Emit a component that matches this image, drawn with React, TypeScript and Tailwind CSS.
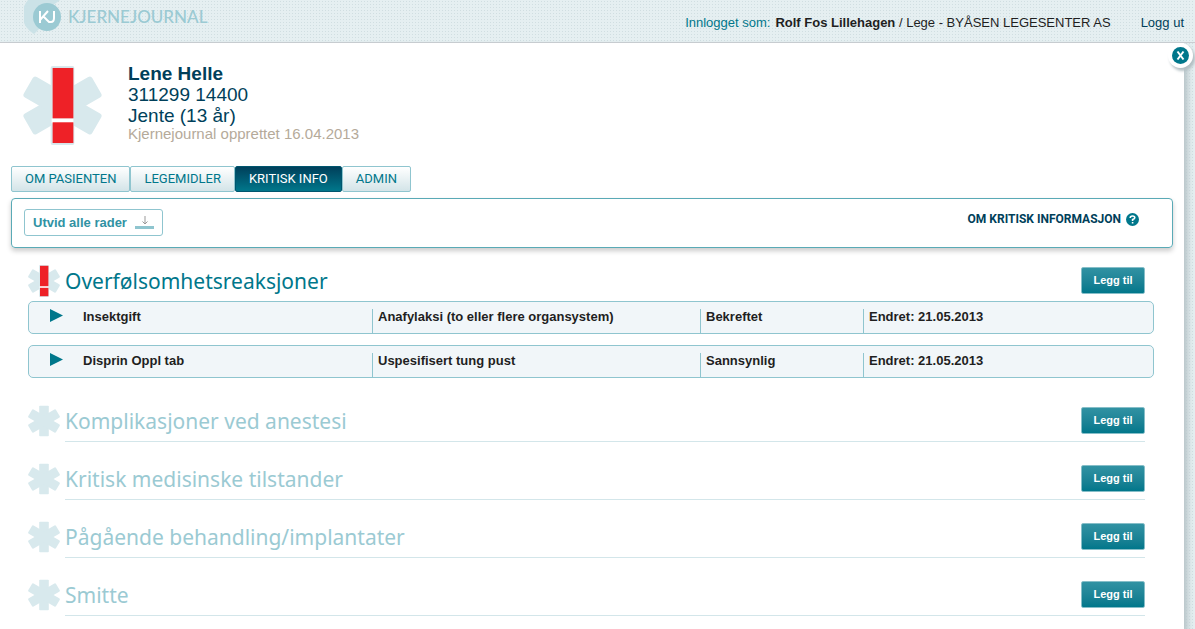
import { useState } from "react";

type Reaction = {
  name: string;
  reaction: string;
  status: string;
  changed: string;
};

const tabs = ["OM PASIENTEN", "LEGEMIDLER", "KRITISK INFO", "ADMIN"];

const reactions: Reaction[] = [
  {
    name: "Insektgift",
    reaction: "Anafylaksi (to eller flere organsystem)",
    status: "Bekreftet",
    changed: "Endret: 21.05.2013",
  },
  {
    name: "Disprin Oppl tab",
    reaction: "Uspesifisert tung pust",
    status: "Sannsynlig",
    changed: "Endret: 21.05.2013",
  },
];

const emptySections = [
  "Komplikasjoner ved anestesi",
  "Kritisk medisinske tilstander",
  "Pågående behandling/implantater",
  "Smitte",
];

const Star = ({ className, alert }: { className: string; alert?: boolean }) => (
  <svg viewBox="0 0 80 80" className={className} aria-hidden="true">
    <g fill="#d8e9ed">
      {!alert && <rect x="28" y="2" width="24" height="76" rx="2" />}
      <rect x="28" y="0" width="24" height="80" rx="3" transform="rotate(60 40 40)" />
      <rect x="28" y="0" width="24" height="80" rx="3" transform="rotate(-60 40 40)" />
      {alert && <rect x="28" y="0" width="24" height="80" rx="2" />}
    </g>
    {alert && (
      <g>
        <rect x="29" y="53" width="22" height="5" fill="#ffffff" />
        <rect x="30" y="2" width="21" height="51" fill="#ee2127" />
        <rect x="30" y="57" width="21" height="21" fill="#ee2127" />
      </g>
    )}
  </svg>
);

const Logo = () => (
  <a href="#" className="flex h-9 items-start gap-1 pl-6" aria-label="Kjernejournal">
    <svg viewBox="0 0 40 36" className="h-9 w-10 shrink-0" aria-hidden="true">
      <path d="M4 0 A22 22 0 0 0 10 34 L16 28 L28 6 L36 0 Z" fill="#cbe2e7" />
      <circle cx="23" cy="17" r="14" fill="#9bcad3" />
      <path
        d="M16 11 V23 M24 11 L16 20 M19 16 L25 22 H27 Q30 22 30 18 V11"
        fill="none"
        stroke="#ffffff"
        strokeWidth="2"
      />
    </svg>
    <span className="pt-[5px] font-[Lato,sans-serif] text-[17px] leading-6 font-medium text-[#9bcad3]">
      KJERNEJOURNAL
    </span>
  </a>
);

const AddButton = () => (
  <button
    type="button"
    className="h-[27px] w-16 shrink-0 rounded-[2px] border border-[#86bec8] bg-linear-to-b from-[#3192a3] to-[#00778b] pb-px text-[11px] leading-4 font-bold text-white"
  >
    Legg til
  </button>
);

const ReactionRow = ({ row }: { row: Reaction }) => {
  const [open, setOpen] = useState(false);
  const cell = "mt-[7px] border-l border-[#8fc5cf] pl-[5px] leading-4";
  return (
    <tr className="grid h-[33px] grid-cols-[343fr_328fr_163fr_290fr] rounded-[5px] border border-[#8fc5cf] bg-[#f1f6f9]">
      <td className="flex items-start gap-5 pt-[7px] pl-[21px] leading-4">
        <button
          type="button"
          aria-label={`Vis ${row.name}`}
          aria-expanded={open}
          onClick={() => setOpen(!open)}
        >
          <svg viewBox="0 0 13 13" className="size-[13px]" aria-hidden="true">
            <path d="M0 0 L13 6.5 L0 13 Z" fill="#00778b" />
          </svg>
        </button>
        {row.name}
      </td>
      <td className={cell}>{row.reaction}</td>
      <td className={cell}>{row.status}</td>
      <td className={cell}>{row.changed}</td>
    </tr>
  );
};

const App: React.FC = () => {
  const [active, setActive] = useState("KRITISK INFO");

  return (
    <div className="flex min-h-screen flex-col bg-[#e5eff1] bg-[radial-gradient(#d0dee1_30%,transparent_30%)] bg-size-[3px_3px] font-['Liberation_Sans',Arial,sans-serif] text-[#1f1f1f]">
      <header className="flex h-[43px] items-start justify-between border-b border-[#c9cdd1] pr-[11px]">
        <Logo />
        <div className="flex items-center gap-[30px] pt-[15px] text-[13px] leading-4">
          <p>
            <span className="mr-[5px] text-[#00778b]">Innlogget som:</span>
            <b>Rolf Fos Lillehagen</b> / Lege - BYÅSEN LEGESENTER AS
          </p>
          <a href="#" className="text-[#003f5a]">
            Logg ut
          </a>
        </div>
      </header>

      <main className="relative mr-[11px] flex-1 bg-white pr-[11px] pb-3 pl-[11px] shadow-[4px_4px_6px_#b8c5c9]">
        <button
          type="button"
          aria-label="Lukk"
          className="absolute top-0 -right-[9px] flex size-[25px] items-center justify-center rounded-full bg-white shadow-[2px_3px_3px_#b3bfc3]"
        >
          <svg viewBox="0 0 17 17" className="size-[17px]" aria-hidden="true">
            <circle cx="8.5" cy="8.5" r="8.5" fill="#00778b" />
            <path d="M5.5 4.5 L11.5 12.5 M11.5 4.5 L5.5 12.5" stroke="#ffffff" strokeWidth="2" />
          </svg>
        </button>

        <section className="flex items-start gap-[26px] pt-5 pl-3">
          <Star className="mt-[3px] size-[79px]" alert />
          <div className="text-[19px] leading-[21px] text-[#003f5a]">
            <h1 className="font-bold">Lene Helle</h1>
            <p>311299 14400</p>
            <p>Jente (13 år)</p>
            <p className="text-[15px] leading-4 text-[#b5aa9a]">
              Kjernejournal opprettet 16.04.2013
            </p>
          </div>
        </section>

        <nav className="mt-[21px] flex font-[Roboto,sans-serif] text-[13px] leading-4">
          {tabs.map((tab) => (
            <button
              key={tab}
              type="button"
              onClick={() => setActive(tab)}
              className={
                tab === active
                  ? "h-[26px] rounded-[2px] border border-[#00566e] bg-linear-to-b from-[#00405b] to-[#00778b] px-[13px] text-white"
                  : "h-[26px] rounded-[2px] border border-[#8fc5cf] bg-linear-to-b from-white to-[#d3e4e8] px-[13px] text-[#00778b]"
              }
            >
              {tab}
            </button>
          ))}
        </nav>

        <section className="mt-[6px] flex h-[50px] items-start justify-between rounded-[4px] border border-[#5aaab6] pt-[10px] pr-[33px] pl-3 shadow-[0_3px_5px_#cccccc]">
          <button
            type="button"
            className="flex h-[27px] items-center gap-2 rounded-[3px] border border-[#8fc5cf] px-2 text-[13px] leading-4 font-bold text-[#3192a3]"
          >
            Utvid alle rader
            <svg viewBox="0 0 19 13" className="h-[13px] w-[19px]" aria-hidden="true">
              <path d="M10 0 V8 M7.5 5.5 L10 8 L12.5 5.5" fill="none" stroke="#999999" />
              <rect y="10" width="19" height="3" fill="#8fc5cf" />
            </svg>
          </button>
          <a
            href="#"
            className="flex items-center gap-[5px] pt-[2px] font-[Roboto,sans-serif] text-[12px] leading-4 font-bold text-[#003f5a]"
          >
            OM KRITISK INFORMASJON
            <svg viewBox="0 0 13 13" className="size-[13px]" aria-hidden="true">
              <circle cx="6.5" cy="6.5" r="6.5" fill="#00778b" />
              <path
                d="M4.2 5 Q4.2 3 6.5 3 Q8.8 3 8.8 4.8 Q8.8 6 6.6 6.6 V8 M6.6 9 V10.6"
                fill="none"
                stroke="#ffffff"
                strokeWidth="1.6"
              />
            </svg>
          </a>
        </section>

        <section className="mt-[17px] pr-[19px] pl-[17px]">
          <div className="flex h-[33px] items-start gap-[5px] pr-[9px]">
            <Star className="size-8" alert />
            <h2 className="flex-1 font-['Noto_Sans',sans-serif] text-[21px] leading-8 text-[#00778b]">
              Overfølsomhetsreaksjoner
            </h2>
            <div className="pt-[2px]">
              <AddButton />
            </div>
          </div>
          <table className="mt-[3px] block text-[13px] font-bold">
            <tbody className="flex flex-col gap-[11px]">
              {reactions.map((row) => (
                <ReactionRow key={row.name} row={row} />
              ))}
            </tbody>
          </table>
        </section>

        <div className="flex flex-col gap-[21px] pt-[27px] pr-7 pl-[17px]">
          {emptySections.map((title) => (
            <section key={title} className="flex h-[37px] gap-[5px]">
              <Star className="size-8 shrink-0" />
              <div className="flex flex-1 items-start justify-between border-b border-[#d3e6ea]">
                <h2 className="font-['Noto_Sans',sans-serif] text-[21px] leading-8 text-[#9bcad3]">
                  {title}
                </h2>
                <div className="pt-[2px]">
                  <AddButton />
                </div>
              </div>
            </section>
          ))}
        </div>
      </main>
    </div>
  );
};

export default App;
